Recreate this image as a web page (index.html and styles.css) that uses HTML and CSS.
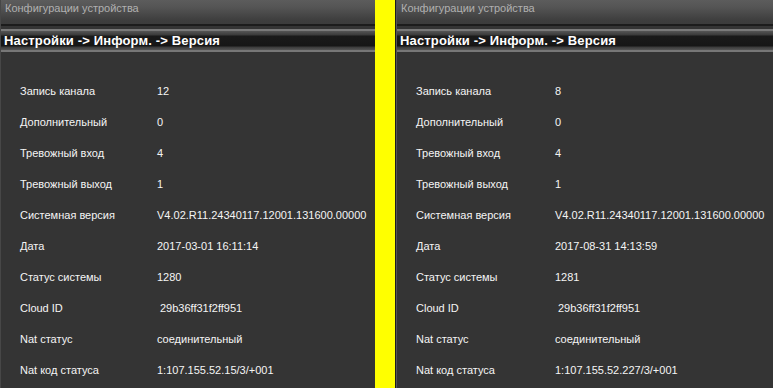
FILE: index.html
```html
<!DOCTYPE html>
<html lang="ru">
<head>
    <meta charset="UTF-8">
    <title>Конфигурации устройства</title>
    <link rel="stylesheet" href="styles.css">
</head>
<body>

    <section class="panel panel--left">
        <div class="panel__title">Конфигурации устройства</div>
        <div class="panel__path">Настройки -&gt; Информ. -&gt; Версия</div>
        <div class="info">
            <div class="info__row"><span class="info__label">Запись канала</span><span>12</span></div>
            <div class="info__row"><span class="info__label">Дополнительный</span><span>0</span></div>
            <div class="info__row"><span class="info__label">Тревожный вход</span><span>4</span></div>
            <div class="info__row"><span class="info__label">Тревожный выход</span><span>1</span></div>
            <div class="info__row"><span class="info__label">Системная версия</span><span>V4.02.R11.24340117.12001.131600.00000</span></div>
            <div class="info__row"><span class="info__label">Дата</span><span>2017-03-01 16:11:14</span></div>
            <div class="info__row"><span class="info__label">Статус системы</span><span>1280</span></div>
            <div class="info__row"><span class="info__label">Cloud ID</span><span class="info__shift">29b36ff31f2ff951</span></div>
            <div class="info__row"><span class="info__label">Nat статус</span><span>соединительный</span></div>
            <div class="info__row"><span class="info__label">Nat код статуса</span><span>1:107.155.52.15/3/+001</span></div>
        </div>
    </section>

    <div class="divider"></div>

    <section class="panel panel--right">
        <div class="panel__title">Конфигурации устройства</div>
        <div class="panel__path">Настройки -&gt; Информ. -&gt; Версия</div>
        <div class="info">
            <div class="info__row"><span class="info__label">Запись канала</span><span>8</span></div>
            <div class="info__row"><span class="info__label">Дополнительный</span><span>0</span></div>
            <div class="info__row"><span class="info__label">Тревожный вход</span><span>4</span></div>
            <div class="info__row"><span class="info__label">Тревожный выход</span><span>1</span></div>
            <div class="info__row"><span class="info__label">Системная версия</span><span>V4.02.R11.24340117.12001.131600.00000</span></div>
            <div class="info__row"><span class="info__label">Дата</span><span>2017-08-31 14:13:59</span></div>
            <div class="info__row"><span class="info__label">Статус системы</span><span>1281</span></div>
            <div class="info__row"><span class="info__label">Cloud ID</span><span class="info__shift">29b36ff31f2ff951</span></div>
            <div class="info__row"><span class="info__label">Nat статус</span><span>соединительный</span></div>
            <div class="info__row"><span class="info__label">Nat код статуса</span><span>1:107.155.52.227/3/+001</span></div>
        </div>
    </section>

</body>
</html>
```

FILE: styles.css
```css
body {
    margin: 0;
    display: flex;
    height: 388px;
    overflow: hidden;
    background: #343434;
    font-family: 'Liberation Sans', Arial, sans-serif;
    font-size: 11px;
    color: #f4f4f4;
}

.panel {
    display: flex;
    flex-direction: column;
    background: #343434;
}

.panel--left {
    width: 374px;
    border-left: 1px solid #474747;
}

.panel--right {
    flex: 1;
    border-left: 1px solid #1c1c1c;
    box-shadow: inset 1px 0 0 #555;
    padding-left: 1px;
}

.divider {
    width: 20px;
    background: #ffff00;
}

.panel__title {
    height: 24px;
    padding-left: 4px;
    line-height: 16px;
    color: #b0b0b0;
    font-size: 11px;
    background: linear-gradient(to bottom, #5c5c5c 0, #555 7px, #3e3e3e 20px, #3c3c3c 24px);
    border-bottom: 2px solid #1c1c1c;
}

.panel__path {
    margin-top: 3px;
    height: 23px;
    line-height: 23px;
    padding-left: 3px;
    color: #fff;
    font-size: 13px;
    font-weight: bold;
    letter-spacing: 0.15px;
    white-space: nowrap;
    background: linear-gradient(to bottom,
        #7a7a7a 0, #7a7a7a 2px,
        #555 2px, #3a3a3a 6px,
        #1a1a1a 7px, #161616 17px,
        #3a3a3a 18px, #555 21px,
        #777 21px, #777 23px);
}

.info {
    padding: 24px 0 0 19px;
}

.info__row {
    display: flex;
    height: 31px;
    line-height: 31px;
    white-space: nowrap;
}

.info__label {
    width: 137px;
    flex-shrink: 0;
}

.panel--right .info__label {
    width: 139px;
}

.info__shift {
    padding-left: 3px;
}
```
